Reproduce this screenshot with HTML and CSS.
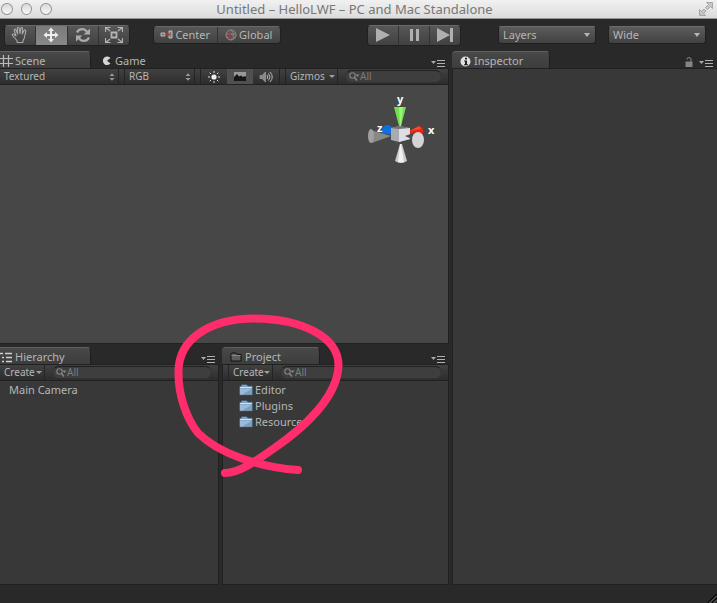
FILE: index.html
```html
<!DOCTYPE html>
<html lang="en">
<head>
<meta charset="utf-8">
<title>Untitled – HelloLWF – PC and Mac Standalone</title>
<link rel="stylesheet" href="styles.css">
</head>
<body>
<svg class="defs" width="0" height="0" aria-hidden="true">
  <symbol id="menu" viewBox="0 0 14 8"><path d="M0 2h5L2.500 5z" fill="#aaa"/><path d="M6 1.500h8M6 4.500h8M6 7.500h8" stroke="#b0b0b0"/></symbol>
  <symbol id="lens" viewBox="0 0 11 10"><circle cx="3.500" cy="3.500" r="2.700" fill="none" stroke="#858585" stroke-width="1.100"/><path d="M5.500 5.500L8 8.500" stroke="#858585" stroke-width="1.500"/><path d="M6.500 2.500h4L8.500 5z" fill="#858585"/></symbol>
  <symbol id="sort" viewBox="0 0 6 8"><path d="M.5 3h5L3 .2zM.5 5h5L3 7.800z" fill="#999"/></symbol>
  <symbol id="folder" viewBox="0 0 14 12"><path d="M.5 11V2.500L2 2 3 .5h4.500L9 2h4.500v9z" fill="#7fa1bd" stroke="#3c5a70" stroke-width=".7"/><path d="M1 4h12v6.500H1z" fill="#7c9fbc"/><path d="M1 3.500h12" stroke="#c9e2f3"/><path d="M1 10.500V4.500h11c-1 3-6 3-8 6z" fill="#9cbcd5"/></symbol>
</svg>
<header class="titlebar">
  <div class="lights"><button aria-label="Close"></button><button aria-label="Minimize"></button><button aria-label="Zoom"></button></div>
  <h1>Untitled – HelloLWF – PC and Mac Standalone</h1>
  <button class="expand" aria-label="Full screen"><svg width="14" height="14" viewBox="0 0 14 14" fill="#c6c6c6" stroke="#999" stroke-width=".8"><path d="M7.500.5h6v6l-2-2-3 3-2-2 3-3zM.5 7.500l2 2 2.500-2.500 2 2-2.500 2.500 2 2h-6z"/></svg></button>
</header>
<div class="toolbar">
  <div class="group tools">
    <button aria-label="Hand"><svg width="18" height="18" viewBox="0 0 18 18" fill="none" stroke="#aaa" stroke-width="1.100" stroke-linejoin="round"><path d="M6 16.500v-2L1.500 9.500c-.8-1.300.8-2 1.700-1L5 10 3.200 4.500c-.3-1.500 1.300-1.800 1.800-.5L6.700 8 6.300 2.500c0-1.600 1.700-1.600 1.900 0L9 7.500l.7-5c.3-1.500 1.900-1.200 1.800.3L11.300 8l1.700-3.500c.7-1.300 2.200-.6 1.800.8L13.500 11c0 2-1 2.500-1.500 3.500v2M6 16.500h6"/></svg></button>
    <button class="on" aria-label="Move"><svg width="16" height="16" viewBox="0 0 16 16" fill="#eee"><path d="M8 .5L11 4H9v3h3V5l3.500 3-3.500 3V9H9v3h2l-3 3.500L5 12h2V9H4v2L.5 8 4 5v2h3V4H5z"/></svg></button>
    <button aria-label="Rotate"><svg width="16" height="16" viewBox="0 0 16 16"><path d="M2 5.500C4 1 10 1 12 5M14 10.500C12 15 6 15 4 11" fill="none" stroke="#aaa" stroke-width="2.200"/><path d="M15 1.500V7.500H8.500zM1 14.500v-6h6.500z" fill="#aaa"/></svg></button>
    <button aria-label="Scale"><svg width="18" height="16" viewBox="0 0 18 16" fill="none" stroke="#b5b5b5"><path d="M6.500 5.500h5v5h-5z" stroke-width="1.800"/><path d="M5 4L1 .8M13 4l4-3.200M5 12l-4 3.200M13 12l4 3.200M.5 5V.5h5M12.500.5h5V5M.5 11v4.500h5M12.500 15.500h5V11" stroke-width="1.200"/></svg></button>
  </div>
  <div class="group pivots">
    <button><svg width="13" height="10" viewBox="0 0 13 10"><path d="M1 3h4v3H1z" fill="#777" stroke="#bbb"/><path d="M9 1h3v7H9z" fill="#777" stroke="#c4c4c4"/><path d="M5 4.500h5M7.500 2.500v4" stroke="#b52e38" stroke-width="1.500"/></svg>Center</button>
    <button><svg width="12" height="12" viewBox="0 0 12 12" fill="none"><circle cx="6" cy="6" r="5" fill="#565656" stroke="#8d8d8d"/><path d="M2 5h8M6 1c3 3 3 7 0 10M2 8.500h8" stroke="#888"/><path d="M4 2.500V8.500h4" stroke="#b52e38" stroke-width="1.300"/></svg>Global</button>
  </div>
  <div class="group play">
    <button aria-label="Play"><svg width="16" height="14" viewBox="0 0 16 14"><path d="M1 0l14 7-14 7z" fill="#b0b0b0"/></svg></button>
    <button aria-label="Pause"><svg width="16" height="14" viewBox="0 0 16 14"><path d="M4 1h3v12H4zM10 1h3v12h-3z" fill="#b0b0b0"/></svg></button>
    <button aria-label="Step"><svg width="18" height="14" viewBox="0 0 18 14"><path d="M1 0l13 7-13 7zM14 0h3v14h-3z" fill="#b0b0b0"/></svg></button>
  </div>
  <div class="drops">
    <span class="drop"><select aria-label="Layers"><option>Layers</option></select></span>
    <span class="drop"><select aria-label="Layout"><option>Wide</option></select></span>
  </div>
</div>
<main class="workspace">
  <div class="left">
    <section class="panel scene">
      <div class="tabs">
        <button class="tab on"><svg width="13" height="12" viewBox="0 0 13 12"><path d="M3.500 0v12M8.500 0v12M0 3.500h13M0 8.500h13" stroke="#bbb" stroke-width="1.200"/></svg>Scene</button>
        <button class="tab game"><svg width="10" height="10" viewBox="0 0 10 10"><path d="M8.500 2L5 4.800 8.500 7.500A4.300 4.300 0 1 1 8.500 2z" fill="#d5d5d5"/></svg>Game</button>
        <button class="menu" aria-label="Scene menu"><svg width="14" height="8"><use href="#menu"/></svg></button>
      </div>
      <div class="bar">
        <button class="mode textured">Textured<svg width="6" height="8"><use href="#sort"/></svg></button>
        <button class="mode rgb">RGB<svg width="6" height="8"><use href="#sort"/></svg></button>
        <div class="toggles">
          <button aria-label="Lighting"><svg width="12" height="12" viewBox="0 0 12 12"><circle cx="6" cy="6" r="2.600" fill="#eee"/><path d="M6 0v2M6 10v2M0 6h2M10 6h2M1.700 1.700l1.300 1.300M9 9l1.300 1.300M1.700 10.300L3 9M9 3l1.300-1.300" stroke="#ddd"/></svg></button>
          <button class="on" aria-label="Skybox"><svg width="12" height="9" viewBox="0 0 12 9"><path d="M0 0h12v9H0z" fill="#999"/><path d="M0 9V5l3-3 2 2.500L7 3.500 9 5l2-1 1 1v4z" fill="#161616"/></svg></button>
          <button aria-label="Sound"><svg width="14" height="12" viewBox="0 0 14 12" fill="none"><path d="M1 4.500h2L6.500 1v10L3 7.500H1z" fill="#888" stroke="#aaa" stroke-width=".6"/><path d="M8 4q1.500 2 0 4M9.500 2.500q3 3.500 0 7M11 1q4.500 5 0 10" stroke="#bbb"/></svg></button>
        </div>
        <button class="mode gizmos">Gizmos<i class="caret"></i></button>
        <label class="search"><svg width="11" height="10"><use href="#lens"/></svg><input type="search" aria-label="Search scene" placeholder="All"></label>
      </div>
      <div class="view">
        <svg class="gizmo" width="70" height="74" viewBox="0 0 70 74" role="img" aria-label="Scene orientation">
          <path d="M15 39q-1-7 5-8 4 0 5 3l1 7z" fill="#0b70e0"/>
          <path d="M39 38l14-6q4 2 3 7l-7 3z" fill="#e52412"/><path d="M43 37l9-5 2 3z" fill="#ff4a2a"/>
          <path d="M24 42L4 36q-3 6 1 13z" fill="#888"/><ellipse cx="4" cy="42" rx="3" ry="7" fill="#a0a0a0"/>
          <path d="M24 34l8-2 11 2v11l-11 3-8-2z" fill="#a9abb1"/><path d="M32 34h11v11l-11 3z" fill="#dcdee3"/><path d="M24 34l8-2 11 2-11 1z" fill="#6f7278"/>
          <path d="M38 42l11-4v9z" fill="#4a4c50"/><ellipse cx="51" cy="46" rx="6" ry="8" fill="#d4d4d6"/>
          <path d="M27 13h12l-5 19h-2z" fill="#73df50"/><path d="M32 13h4l-2 19h-1z" fill="#98f477"/>
          <path d="M33 50h2l5 17q-6 4-12 0z" fill="#c9c9c9"/><path d="M33 50h1l3 18q-3 1-6 0z" fill="#f1f1f1"/>
          <text x="30" y="9">y</text><text x="10" y="38">z</text><text x="61" y="40">x</text>
        </svg>
      </div>
    </section>
    <div class="lower">
      <section class="panel">
        <div class="tabs">
          <button class="tab on"><svg width="13" height="11" viewBox="0 0 13 11"><path d="M0 1.500h3M2 5.500h2M2 9.500h2M5 1.500h7M6 5.500h6M6 9.500h6" stroke="#d0d0d0" stroke-width="1.500"/></svg>Hierarchy</button>
          <button class="menu" aria-label="Hierarchy menu"><svg width="14" height="8"><use href="#menu"/></svg></button>
        </div>
        <div class="bar">
          <button class="mode create">Create<i class="caret"></i></button>
          <label class="search"><svg width="11" height="10"><use href="#lens"/></svg><input type="search" aria-label="Search hierarchy" placeholder="All"></label>
        </div>
        <ul class="list"><li>Main Camera</li></ul>
      </section>
      <section class="panel project">
        <div class="tabs">
          <button class="tab on"><svg width="12" height="10" viewBox="0 0 12 10"><path d="M1 9V2.500L2 1h4l1 1.500h4V9z" fill="#5d5d5d" stroke="#111"/><path d="M1.500 3.500h9" stroke="#888"/></svg>Project</button>
          <button class="menu" aria-label="Project menu"><svg width="14" height="8"><use href="#menu"/></svg></button>
        </div>
        <div class="bar">
          <button class="mode create">Create<i class="caret"></i></button>
          <label class="search"><svg width="11" height="10"><use href="#lens"/></svg><input type="search" aria-label="Search project" placeholder="All"></label>
        </div>
        <ul class="list folders">
          <li><svg width="14" height="12"><use href="#folder"/></svg>Editor</li>
          <li><svg width="14" height="12"><use href="#folder"/></svg>Plugins</li>
          <li><svg width="14" height="12"><use href="#folder"/></svg>Resources</li>
        </ul>
      </section>
    </div>
  </div>
  <section class="panel inspector">
    <div class="tabs">
      <button class="tab on"><svg width="11" height="11" viewBox="0 0 11 11"><circle cx="5.500" cy="5.500" r="5" fill="#e0e0e0"/><path d="M5 1.800h2v1.700H5zM4 4.500h3v3.700h1v1H4v-1h1V5.500H4z" fill="#222"/></svg>Inspector</button>
      <button class="menu lock" aria-label="Lock"><svg width="8" height="10" viewBox="0 0 8 10"><path d="M.5 4.500h7V10h-7z" fill="#858585"/><path d="M2 2.500V1.500Q4-.5 6 1.500V5" fill="none" stroke="#858585"/></svg></button>
      <button class="menu" aria-label="Inspector menu"><svg width="14" height="8"><use href="#menu"/></svg></button>
    </div>
    <div class="empty"></div>
  </section>
</main>
<footer class="status"><svg width="10" height="10" viewBox="0 0 10 10"><path d="M1 10l9-9M5 10l5-5" stroke="#080808" stroke-width="1.500"/><path d="M2.500 10L10 2.500M6.500 10L10 6.500" stroke="#777"/></svg></footer>
<svg class="marker" width="170" height="166" viewBox="174 312 170 166" aria-hidden="true"><path d="M298 470C256 467 217 452 198 433C186 418 178 394 178.500 371C179 340 208 318.500 255 318.500C302 319 339 337 338.500 366C337 397 305 427 273 449C256 461 239 473 225 473"/></svg>
</body>
</html>
```
FILE: styles.css
```css
* { box-sizing: border-box; }
body {
  margin: 0;
  min-height: 100vh;
  display: flex;
  flex-direction: column;
  position: relative;
  background: #292929;
  color: #b6b6b6;
  font: 11px/16px "Noto Sans", "Open Sans", sans-serif;
}
button, input, select {
  margin: 0;
  padding: 0;
  border: 0;
  background: none;
  color: inherit;
  font: inherit;
}
svg { flex: none; }
.defs { position: absolute; }

.titlebar {
  display: grid;
  grid-template-columns: 52px 1fr 60px;
  align-items: center;
  height: 19px;
  background: linear-gradient(#f1f1f1, #dcdcdc);
  border-bottom: 1px solid #949494;
}
.titlebar h1 {
  margin: 0;
  color: #777;
  font-size: 13px;
  font-weight: 400;
  line-height: 16px;
  text-align: center;
  white-space: nowrap;
}
.lights { display: flex; gap: 8px; padding-left: 1px; }
.lights button {
  width: 12px;
  height: 12px;
  border: 1px solid #959595;
  border-radius: 50%;
  background: linear-gradient(#d9d9d9, #f8f8f8);
}
.expand { display: flex; justify-self: end; padding-right: 4px; }

.toolbar {
  display: flex;
  align-items: center;
  height: 32px;
  padding: 0 11px 0 4px;
}
.group {
  display: flex;
  height: 21px;
  border: 1px solid #202020;
  border-top-color: #686868;
  border-radius: 4px;
  overflow: hidden;
}
.group button {
  display: flex;
  flex: 1;
  align-items: center;
  justify-content: center;
  gap: 2px;
  background: linear-gradient(#575757, #414141);
}
.group button + button { border-left: 1px solid #333; }
.group .on { background: linear-gradient(#7b7b7b, #888); }
.tools { width: 126px; }
.pivots { width: 128px; height: 18px; margin-left: 23px; }
.play { width: 94px; margin-left: auto; }
.drops { display: flex; gap: 12px; margin-left: 37px; }
.drop { position: relative; }
.drop::after {
  content: "";
  position: absolute;
  top: 7px;
  right: 6px;
  border: 3px solid transparent;
  border-top: 4px solid #b5b5b5;
  border-bottom: 0;
}
.drop select {
  display: block;
  width: 98px;
  height: 18px;
  padding-left: 4px;
  border: 1px solid #202020;
  border-top-color: #6c6c6c;
  border-radius: 3px;
  background: linear-gradient(#5c5c5c, #414141);
  appearance: none;
}

.workspace {
  flex: 1;
  display: grid;
  grid-template-columns: 449fr 265fr;
  gap: 3px;
}
.left { display: flex; flex-direction: column; gap: 3px; min-width: 0; }
.panel { display: flex; flex-direction: column; min-width: 0; }
.scene { flex: 293; }
.lower {
  flex: 238;
  display: grid;
  grid-template-columns: 219fr 227fr;
  gap: 3px;
}
.tabs {
  display: flex;
  align-items: flex-end;
  height: 17px;
  padding-right: 4px;
}
.tab {
  display: flex;
  align-items: center;
  gap: 3px;
  height: 17px;
  padding: 2px 0 0 2px;
}
.tab.on {
  gap: 2px;
  width: 91px;
  padding-left: 0;
  border: 1px solid #1d1d1d;
  border-top-color: #606060;
  border-width: 1px 1px 0 0;
  border-radius: 0 4px 0 0;
  background: linear-gradient(#484848, #3d3d3d);
}
.project .tab.on, .inspector .tab.on {
  gap: 3px;
  width: 98px;
  padding-left: 8px;
  border-radius: 4px 4px 0 0;
}
.tab.game { margin-left: 9px; }
.menu { display: flex; margin-left: auto; padding-bottom: 1px; }
.lock + .menu { margin-left: 6px; }

.bar {
  display: flex;
  align-items: center;
  height: 17px;
  border: 1px solid #212121;
  border-left: 0;
  background: linear-gradient(#414141, #2d2d2d);
  font-size: 10px;
  line-height: 15px;
}
.mode {
  display: flex;
  flex: none;
  align-items: center;
  justify-content: space-between;
  height: 15px;
  padding: 0 3px 0 4px;
  border-right: 1px solid #242424;
}
.textured { width: 119px; }
.rgb {
  width: 71px;
  margin: 0 5px;
  border-left: 1px solid #242424;
}
.toggles {
  display: flex;
  flex: none;
  border: 1px solid #242424;
  border-width: 0 1px;
}
.toggles button {
  display: flex;
  align-items: center;
  justify-content: center;
  width: 26px;
  height: 15px;
}
.toggles .on { background: #505050; }
.gizmos {
  width: 53px;
  margin-left: 5px;
  padding-right: 2px;
  border-left: 1px solid #242424;
}
.create { width: 45px; padding-right: 2px; }
.caret {
  border: 3px solid transparent;
  border-top: 3px solid #a0a0a0;
  border-bottom: 0;
}
.search {
  display: flex;
  flex: 1;
  align-items: center;
  min-width: 0;
  height: 13px;
  margin: 0 6px 0 7px;
  padding-left: 3px;
  border: 1px solid #333;
  border-top-color: #1f1f1f;
  border-radius: 7px;
  background: #3e3e3e;
}
.search input {
  flex: 1;
  min-width: 0;
  height: 11px;
  outline: 0;
  line-height: 11px;
}
.search input::placeholder { color: #7d7d7d; opacity: 1; }
.project .bar { padding-left: 5px; border-left: 1px solid #212121; }
.project .create { border-left: 1px solid #242424; }

.view, .list, .empty {
  flex: 1;
  border: 1px solid #212121;
  border-width: 0 1px 1px 0;
  background: #383838;
}
.view {
  display: flex;
  justify-content: flex-end;
  padding: 9px 11px;
  background: #474747;
}
.gizmo { overflow: visible; }
.gizmo text {
  fill: #fff;
  font-size: 11px;
  font-weight: 700;
}
.list {
  margin: 0;
  padding: 1px 9px;
  list-style: none;
}
.folders { padding-left: 16px; border-left-width: 1px; }
.list li { display: flex; align-items: center; gap: 2px; height: 16px; }
.empty { border-width: 1px 0 1px 1px; }

.status {
  display: flex;
  align-items: flex-end;
  justify-content: flex-end;
  height: 18px;
}
.marker {
  position: absolute;
  top: 312px;
  left: 174px;
  fill: none;
  stroke: #ff2d6b;
  stroke-width: 8;
  stroke-linecap: round;
  pointer-events: none;
}
```
